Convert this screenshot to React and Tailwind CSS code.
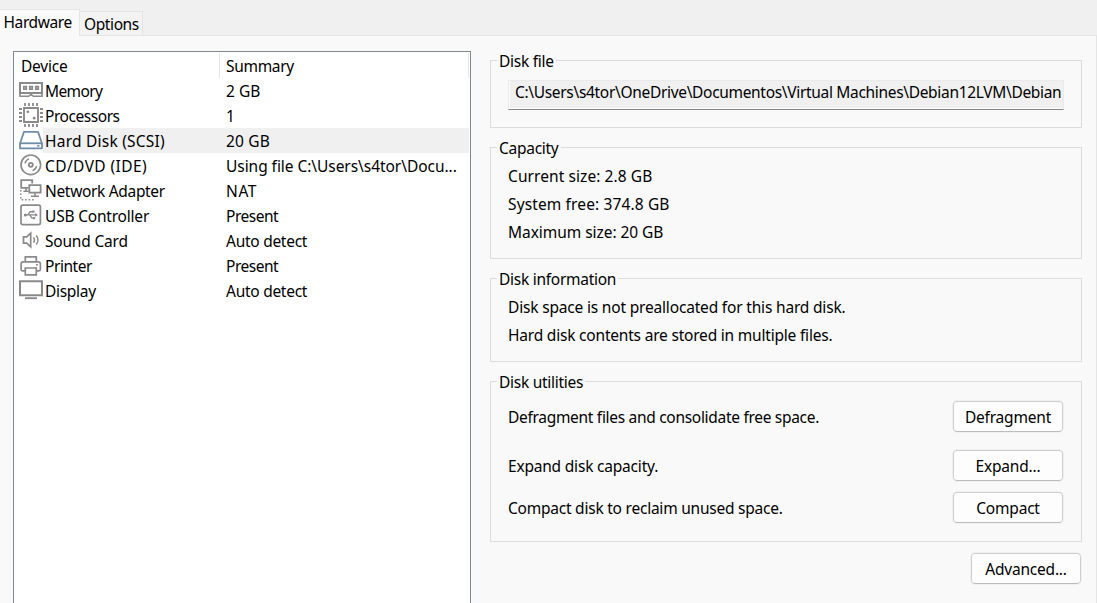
import React from "react";

function Icon({ children, className = "text-[#8a8a8a]" }) {
  return (
    <svg width="24" height="24" viewBox="0 0 24 24" fill="none" stroke="currentColor" className={`shrink-0 ${className}`}>
      {children}
    </svg>
  );
}

const MemoryIcon = () => (
  <Icon>
    <path d="M1 5h22v10H1z" strokeWidth="2" />
    <path d="M4.7 8.6h2.7v2.7H4.7zM10.7 8.6h2.7v2.7h-2.7zM16.7 8.6h2.7v2.7h-2.7z" fill="#bbb" strokeWidth="1.5" />
    <path d="M1 14v4.3h8.5l2.5-1.8 2.5 1.8H23V14" strokeWidth="1.6" />
  </Icon>
);

const ProcessorIcon = () => (
  <Icon>
    <path d="M5 5h14v14H5z" strokeWidth="1.9" />
    <path d="M6 0v3M10 0v3M14 0v3M18 0v3M6 21v3M10 21v3M14 21v3M18 21v3M0 6h3M0 10h3M0 14h3M0 18h3M21 6h3M21 10h3M21 14h3M21 18h3" strokeWidth="1.8" />
    <circle cx="8.8" cy="8.8" r="1.4" fill="currentColor" stroke="none" />
    <circle cx="15.2" cy="15.2" r="1.4" fill="currentColor" stroke="none" />
  </Icon>
);

const DiskIcon = () => (
  <Icon className="text-[#6f8ca6]">
    <path d="M5 3.8h14L23 15.5v4.8H1v-4.8z" fill="#fff" strokeWidth="1.8" strokeLinejoin="round" />
    <path d="M1 15.3h22" strokeWidth="1.8" />
    <path d="M18.2 17h2.2v1.6h-2.2z" fill="currentColor" stroke="none" />
  </Icon>
);

const DiscIcon = () => (
  <Icon>
    <circle cx="11.8" cy="11.8" r="9.8" strokeWidth="1.7" />
    <circle cx="11.8" cy="11.8" r="2" strokeWidth="1.8" />
    <path d="M6 10.4q.8-3.4 4-4.5M17.6 13.2q-.8 3.4-4 4.5" strokeWidth="1.5" />
  </Icon>
);

const NetworkIcon = () => (
  <Icon>
    <path d="M9.5 9.8H2.2V2.2h11v3.4" strokeWidth="1.8" />
    <path d="M10.3 7.2h11.3v7.5H10.3z" strokeWidth="1.8" />
    <path d="M7 10v3M4.5 13.2h5M16 15v3M12 18.2h8" strokeWidth="1.6" />
    <path d="M1.8 12v9.7H15" strokeWidth="1.4" strokeDasharray="1.6 1.9" />
  </Icon>
);

const UsbIcon = () => (
  <Icon>
    <rect x="2" y="2.2" width="19.4" height="19.4" rx="1.8" strokeWidth="1.7" />
    <path d="M6 11.9h11M8.7 11.9l2.4-3.2h2.6M10.7 11.9l2.2 3.2h1.8" strokeWidth="1.4" />
    <circle cx="6.3" cy="11.9" r="1.5" fill="currentColor" stroke="none" />
    <path d="M16.2 10l2.8 1.9-2.8 1.9zM13.3 7.6h2.2v2.2h-2.2zM14 14h2.2v2.2H14z" fill="currentColor" stroke="none" />
  </Icon>
);

const SoundIcon = () => (
  <Icon>
    <path d="M4.5 8.8h3.2l4-3.6v13.6l-4-3.6H4.5z" strokeWidth="1.7" />
    <path d="M14.5 9.3q2 2.7 0 5.4M17.2 7.5q3.6 4.5 0 9" strokeWidth="1.4" />
  </Icon>
);

const PrinterIcon = () => (
  <Icon>
    <path d="M6.3 8.9V3.8h11v5.1" strokeWidth="1.7" />
    <path d="M6.3 17.8H3.6q-1.5 0-1.5-1.5v-5.1q0-2.3 2.2-2.3h14.9q2.2 0 2.2 2.3v5.1q0 1.5-1.5 1.5h-2.6" strokeWidth="1.7" />
    <path d="M6.3 15h11v6.8h-11z" strokeWidth="1.7" />
    <path d="M17 11h2v1.5h-2z" fill="currentColor" stroke="none" />
  </Icon>
);

const DisplayIcon = () => (
  <Icon>
    <path d="M1 3.2h22v14H1z" strokeWidth="2.1" />
    <path d="M6 20.2h12" strokeWidth="1.9" />
  </Icon>
);

const devices = [
  { name: "Memory", summary: "2 GB", icon: MemoryIcon, nameTrack: "tracking-[-0.6px]", summaryTrack: "tracking-[0px]" },
  { name: "Processors", summary: "1", icon: ProcessorIcon, nameTrack: "tracking-[-0.45px]" },
  { name: "Hard Disk (SCSI)", summary: "20 GB", icon: DiskIcon, selected: true, nameTrack: "tracking-[0.23px]", summaryTrack: "tracking-[0.15px]" },
  { name: "CD/DVD (IDE)", summary: "Using file C:\\Users\\s4tor\\Docu...", icon: DiscIcon, nameTrack: "tracking-[0.4px]", summaryTrack: "tracking-[-0.05px]" },
  { name: "Network Adapter", summary: "NAT", icon: NetworkIcon, nameTrack: "tracking-[-0.33px]", summaryTrack: "tracking-[0.6px]" },
  { name: "USB Controller", summary: "Present", icon: UsbIcon, summaryTrack: "tracking-[-0.5px]" },
  { name: "Sound Card", summary: "Auto detect", icon: SoundIcon, summaryTrack: "tracking-[-0.27px]" },
  { name: "Printer", summary: "Present", icon: PrinterIcon, nameTrack: "tracking-[-0.45px]", summaryTrack: "tracking-[-0.5px]" },
  { name: "Display", summary: "Auto detect", icon: DisplayIcon, nameTrack: "tracking-[-0.3px]", summaryTrack: "tracking-[-0.27px]" },
];

function DeviceList() {
  return (
    <div className="mt-[15px] ml-[13px] h-[560px] w-[458px] shrink-0 border border-[#828790] bg-white pt-px pr-px">
      <div className="flex h-[25px] leading-[26px]">
        <div className="w-[206px] border-r border-[#e5e5e5] pl-[7px]">Device</div>
        <div className="flex-1 border-r border-[#e5e5e5] pl-1.5 tracking-[-0.3px]">Summary</div>
      </div>
      {devices.map(({ name, summary, icon: DeviceIcon, selected, nameTrack = "", summaryTrack = "" }) => (
        <div key={name} className="flex h-[25px] pl-[5px] leading-[26px]">
          <DeviceIcon />
          <div className={selected ? "flex flex-1 bg-[#f0f0f0]" : "flex flex-1"}>
            <div className={`w-[183px] pl-0.5 ${nameTrack}`}>{name}</div>
            <div className={summaryTrack}>{summary}</div>
          </div>
        </div>
      ))}
    </div>
  );
}

function Group({ title, className, children }) {
  return (
    <section className={`w-[592px] border border-[#dcdcdc] ${className}`}>
      <h2 className="-mt-[11px] ml-1.5 h-[22px] w-fit bg-[#f9f9f9] px-0.5 leading-[22px] tracking-[-0.27px]">{title}</h2>
      {children}
    </section>
  );
}

function Button({ children }) {
  return (
    <button className="h-[31px] w-[110px] rounded-[4px] border border-[#cfcfcf] border-b-[#bcbcbc] bg-[#fdfdfd] pt-px leading-[28px] outline outline-[#f0f0f0]">
      {children}
    </button>
  );
}

export default function App() {
  return (
    <div className="flex h-[603px] w-[1097px] flex-col overflow-hidden bg-[#f0f0f0] font-['Noto_Sans','Open_Sans',sans-serif] text-[15.5px] tracking-[-0.2px] whitespace-nowrap text-black">
      <div className="flex h-[35px] shrink-0 items-end">
        <div className="z-10 -mb-px h-[27px] w-20 border-t border-r border-[#e5e5e5] bg-[#f9f9f9] pl-[3.5px] leading-[25px] tracking-[-0.4px]">Hardware</div>
        <div className="h-6 w-[63px] border-t border-r border-[#e5e5e5] bg-[#f3f3f3] pl-1 leading-[25px] tracking-[-0.4px]">Options</div>
      </div>
      <div className="flex flex-1 border-t border-r border-[#e5e5e5] bg-[#f9f9f9]">
        <DeviceList />
        <main className="ml-[19px] flex flex-col">
          <Group title="Disk file" className="mt-6 h-[68px]">
            <div className="mt-2 ml-[17px] h-[30px] w-[556px] border border-[#eaeaea] border-b-[#858585] bg-[#f0f0f0] pl-1.5 leading-[23px] tracking-[-0.32px] shadow-[inset_0_-1px_0_#fff,inset_1px_0_0_#fff]">
              C:\Users\s4tor\OneDrive\Documentos\Virtual Machines\Debian12LVM\Debian
            </div>
          </Group>
          <Group title="Capacity" className="mt-[19px] h-[112px]">
            <div className="mt-[3px] pl-[17px] leading-7">
              <p className="tracking-[0.08px]">Current size: 2.8 GB</p>
              <p className="tracking-[0.13px]">System free: 374.8 GB</p>
              <p className="tracking-[-0.05px]">Maximum size: 20 GB</p>
            </div>
          </Group>
          <Group title="Disk information" className="mt-[19px] h-[84px]">
            <div className="mt-[3px] pl-[17px] leading-7">
              <p className="tracking-[-0.18px]">Disk space is not preallocated for this hard disk.</p>
              <p>Hard disk contents are stored in multiple files.</p>
            </div>
          </Group>
          <Group title="Disk utilities" className="mt-[19px] h-[161px]">
            <div className="mt-2 flex flex-col pr-[18px] pl-[17px]">
              <div className="flex h-8 items-start justify-between">
                <p className="leading-8 tracking-[-0.3px]">Defragment files and consolidate free space.</p>
                <Button>Defragment</Button>
              </div>
              <div className="mt-[17px] flex h-8 items-start justify-between">
                <p className="leading-8">Expand disk capacity.</p>
                <Button>Expand...</Button>
              </div>
              <div className="mt-2.5 flex h-8 items-start justify-between">
                <p className="leading-8 tracking-[-0.23px]">Compact disk to reclaim unused space.</p>
                <Button>Compact</Button>
              </div>
            </div>
          </Group>
          <div className="mt-[11px] mr-px flex justify-end">
            <Button>Advanced...</Button>
          </div>
        </main>
      </div>
    </div>
  );
}
